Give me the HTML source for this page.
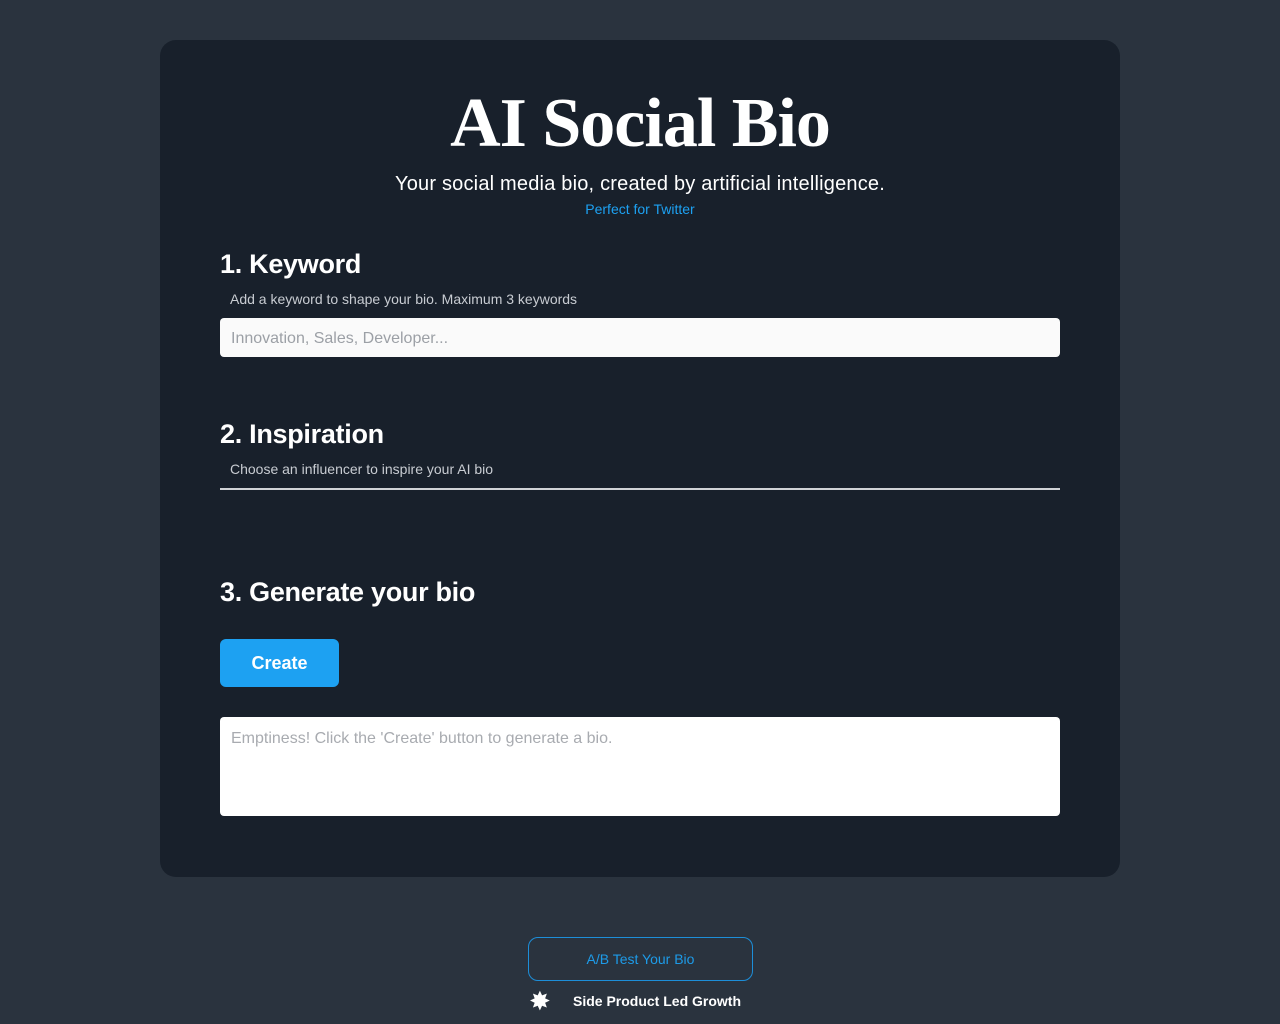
<!DOCTYPE html>
<html><head><style>
*{box-sizing:border-box;margin:0;padding:0}
body{width:1280px;height:1024px;background:#2a333e;font-family:"Liberation Sans",sans-serif;position:relative;overflow:hidden}
.card{position:absolute;left:160px;top:40px;width:960px;height:837px;background:#18202b;border-radius:16px}
h1{position:absolute;top:84px;left:0;width:1280px;text-align:center;font-family:"Liberation Serif",serif;font-weight:bold;font-size:70px;color:#fff;letter-spacing:-1px}
.sub{position:absolute;top:173px;width:1280px;text-align:center;color:#fff;font-size:20px;letter-spacing:0.2px}
.tw{position:absolute;top:201px;width:1280px;text-align:center;color:#1da1f2;font-size:14px}
h2{position:absolute;left:220px;color:#fff;font-size:27px;font-weight:bold;letter-spacing:-0.3px}
.hint{position:absolute;left:230px;color:#c8ccd2;font-size:14px}
.inp{position:absolute;left:220px;width:840px;background:#fafafa;border-radius:4px;color:#9ca0a6;font-size:16px;padding:13px 11px}
</style></head><body>
<div class="card"></div>
<h1>AI Social Bio</h1>
<div class="sub">Your social media bio, created by artificial intelligence.</div>
<div class="tw">Perfect for Twitter</div>
<h2 style="top:249px">1. Keyword</h2>
<div class="hint" style="top:291px">Add a keyword to shape your bio. Maximum 3 keywords</div>
<div class="inp" style="top:318px;height:39px;padding-top:12px">Innovation, Sales, Developer...</div>
<h2 style="top:419px">2. Inspiration</h2>
<div class="hint" style="top:461px">Choose an influencer to inspire your AI bio</div>
<div style="position:absolute;left:220px;top:488px;width:840px;height:2px;background:#d0d3d6"></div>
<h2 style="top:577px">3. Generate your bio</h2>
<div style="position:absolute;left:220px;top:639px;width:119px;height:48px;background:#1da1f2;border-radius:6px;color:#fff;font-weight:bold;font-size:18px;text-align:center;line-height:48px">Create</div>
<div class="inp" style="top:717px;height:99px;background:#fff;color:#a8abb0;padding-top:13px">Emptiness! Click the 'Create' button to generate a bio.</div>
<div style="position:absolute;left:528px;top:937px;width:225px;height:44px;border:1.5px solid #1d8ed8;border-radius:10px;color:#1d9be8;font-size:14px;text-align:center;line-height:42px">A/B Test Your Bio</div>
<div style="position:absolute;left:529px;top:988px;color:#fff;font-size:26px;line-height:26px">✸</div>
<div style="position:absolute;left:573px;top:993px;color:#fff;font-size:14px;font-weight:bold">Side Product Led Growth</div>
</body></html>
